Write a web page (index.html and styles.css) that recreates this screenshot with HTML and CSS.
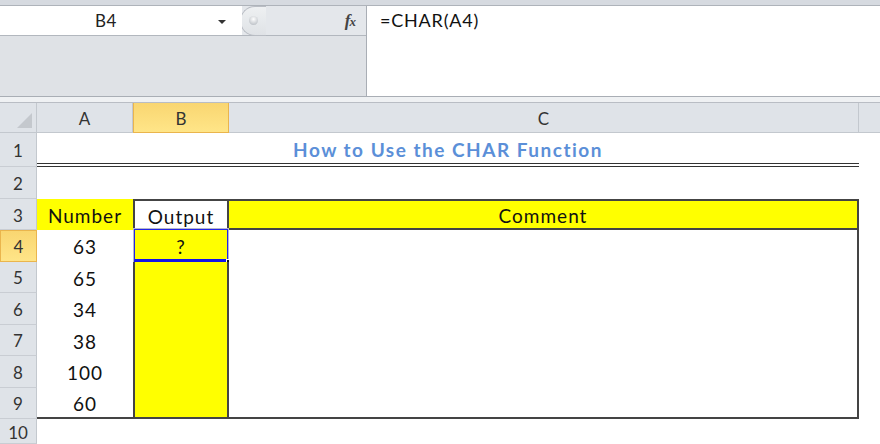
FILE: index.html
```html
<!DOCTYPE html>
<html>
<head>
<meta charset="utf-8">
<link rel="stylesheet" href="styles.css">
</head>
<body>
<div class="app">
  <div class="topstrip"></div>
  <div class="fbar">
    <div class="fleft">
      <div class="nrow">
        <div class="namebox"><span class="nbtext">B4</span><span class="dd"></span></div>
        <div class="fxzone">
          <div class="grip"><span class="knob"></span></div>
          <span class="fx">f<span class="fxx">x</span></span>
        </div>
      </div>
      <div class="fgray"></div>
    </div>
    <div class="formula">=CHAR(A4)</div>
  </div>
  <div class="sep"></div>
  <div class="grid">
    <div class="ch corner"><span class="tri"></span></div>
    <div class="ch">A</div>
    <div class="ch sel">B</div>
    <div class="ch">C</div>
    <div class="ch last"></div>

    <div class="rh">1</div>
    <div class="c title">How to Use the CHAR Function</div>
    <div class="c"></div>

    <div class="rh">2</div>
    <div class="c"></div><div class="c"></div><div class="c"></div><div class="c"></div>

    <div class="rh">3</div>
    <div class="c y ctr">Number</div>
    <div class="c bx ctr">Output</div>
    <div class="c y cbox ctr">Comment</div>
    <div class="c"></div>

    <div class="rh sel">4</div>
    <div class="c ctr">63</div>
    <div class="c y bcol ctr active">?<span class="selbox"></span><span class="handle"></span></div>
    <div class="c rb"></div>
    <div class="c"></div>

    <div class="rh">5</div>
    <div class="c ctr">65</div>
    <div class="c y bcol"></div>
    <div class="c rb"></div>
    <div class="c"></div>

    <div class="rh">6</div>
    <div class="c ctr">34</div>
    <div class="c y bcol"></div>
    <div class="c rb"></div>
    <div class="c"></div>

    <div class="rh">7</div>
    <div class="c ctr">38</div>
    <div class="c y bcol"></div>
    <div class="c rb"></div>
    <div class="c"></div>

    <div class="rh">8</div>
    <div class="c ctr">100</div>
    <div class="c y bcol"></div>
    <div class="c rb"></div>
    <div class="c"></div>

    <div class="rh">9</div>
    <div class="c ctr bb">60</div>
    <div class="c y bcol bb"></div>
    <div class="c rb bb"></div>
    <div class="c"></div>

    <div class="rh">10</div>
    <div class="c"></div><div class="c"></div><div class="c"></div><div class="c"></div>
  </div>
</div>
</body>
</html>
```

FILE: styles.css
```css
* { box-sizing: border-box; }
html, body { margin: 0; padding: 0; }
body {
  width: 880px;
  height: 444px;
  overflow: hidden;
  background: #fff;
  font-family: Lato, "Open Sans", sans-serif;
  color: #111;
}
.app { width: 880px; height: 444px; display: flex; flex-direction: column; }

.topstrip {
  height: 6px;
  background: #d6dae0;
  border-bottom: 1px solid #aeb3ba;
}
.fbar { display: flex; height: 90px; }
.fleft { width: 367px; display: flex; flex-direction: column; border-right: 1px solid #a9aeb5; }
.nrow { height: 30px; display: flex; border-bottom: 1px solid #b2b7be; }
.namebox {
  width: 242px;
  background: #fff;
  display: flex;
  align-items: center;
  position: relative;
}
.nbtext {
  width: 212px;
  text-align: center;
  font-size: 17px;
  letter-spacing: 0.5px;
  color: #222;
}
.dd {
  width: 0; height: 0;
  border-left: 4px solid transparent;
  border-right: 4px solid transparent;
  border-top: 4px solid #333;
  margin-left: 6px;
  margin-top: 2px;
}
.fxzone {
  flex: 1;
  display: flex;
  align-items: center;
  background: #e4e7eb;
  margin-left: -2px;
}
.grip {
  width: 26px;
  height: 30px;
  border: 1px solid #b9bdc4;
  border-right: none;
  border-radius: 15px 0 0 15px;
  background: linear-gradient(#eef0f2, #dfe2e6);
  display: flex;
  align-items: center;
  padding-left: 8px;
}
.knob {
  width: 9px; height: 9px;
  border-radius: 50%;
  background: radial-gradient(circle at 50% 35%, #fff, #c5c9ce 70%, #a8adb3);
}
.fx {
  margin-left: auto;
  margin-right: 11px;
  font-family: "Liberation Serif", serif;
  font-style: italic;
  font-weight: bold;
  font-size: 17px;
  color: #444;
  letter-spacing: -1px;
}
.fxx { font-size: 13px; }
.fgray { flex: 1; background: #dfe2e6; }
.formula {
  flex: 1;
  background: #fff;
  padding: 3px 0 0 13px;
  font-size: 18px;
  letter-spacing: 0.8px;
  color: #111;
}
.sep {
  height: 7px;
  background: #eff1f3;
  border-top: 1px solid #a9aeb5;
  border-bottom: 1px solid #b9bdc4;
}

.grid {
  flex: 1;
  display: grid;
  grid-template-columns: 37px 96px 96px 630px 1fr;
  grid-template-rows: 30px 34px 32px 31px 31.5px 31.5px 31.5px 31.5px 31.5px 31.5px 1fr;
}
.ch {
  background: #dfe3e8;
  border-right: 1px solid #c3c8ce;
  border-bottom: 1px solid #c3c8ce;
  display: flex;
  align-items: center;
  justify-content: center;
  font-size: 17px;
  color: #333;
  padding-top: 2px;
}
.ch.last { border-right: none; }
.corner { position: relative; }
.tri {
  position: absolute;
  right: 4px; bottom: 4px;
  width: 0; height: 0;
  border-left: 15px solid transparent;
  border-bottom: 15px solid #c4c8cd;
}
.ch.sel, .rh.sel {
  background: linear-gradient(#f9d671, #ffe588);
  border-color: #eab54d;
  border-left: 1px solid #eab54d;
  color: #333;
}
.rh.sel { border-top: 1px solid #eab54d; }
.rh {
  background: #dfe3e8;
  border-right: 1px solid #c3c8ce;
  border-bottom: 1px solid #c9cdd3;
  display: flex;
  align-items: center;
  justify-content: center;
  font-size: 17px;
  color: #333;
  padding-top: 2px;
}
.c {
  background: #fff;
  font-size: 19px;
  letter-spacing: 1px;
  color: #111;
  position: relative;
}
.ctr { display: flex; align-items: center; justify-content: center; padding-top: 2px; }
.title {
  grid-column: 2 / 5;
  display: flex;
  align-items: center;
  justify-content: center;
  font-weight: bold;
  font-size: 19px;
  letter-spacing: 1.5px;
  color: #5b8fd8;
  border-bottom: 4px double #333;
  padding-top: 3px;
}
.y { background: #ffff00; }
.bx { border: 2px solid #444; border-bottom: none; }
.cbox { border-top: 2px solid #444; border-right: 2px solid #444; border-bottom: 2px solid #444; }
.bcol { border-left: 2px solid #444; border-right: 2px solid #444; }
.rb { border-right: 2px solid #444; }
.bb { border-bottom: 2px solid #444; }
.selbox {
  position: absolute;
  left: -1px; top: -1px; right: -1px; bottom: 0;
  border: 1px solid #2424e8;
  border-bottom: 3px solid #1414e6;
  box-shadow: 0 0 0 1px #b6b9c9;
}
.handle {
  position: absolute;
  right: -4px; bottom: -3px;
  width: 5px; height: 6px;
  background: #111;
  border: 1px solid #fff;
}
```
